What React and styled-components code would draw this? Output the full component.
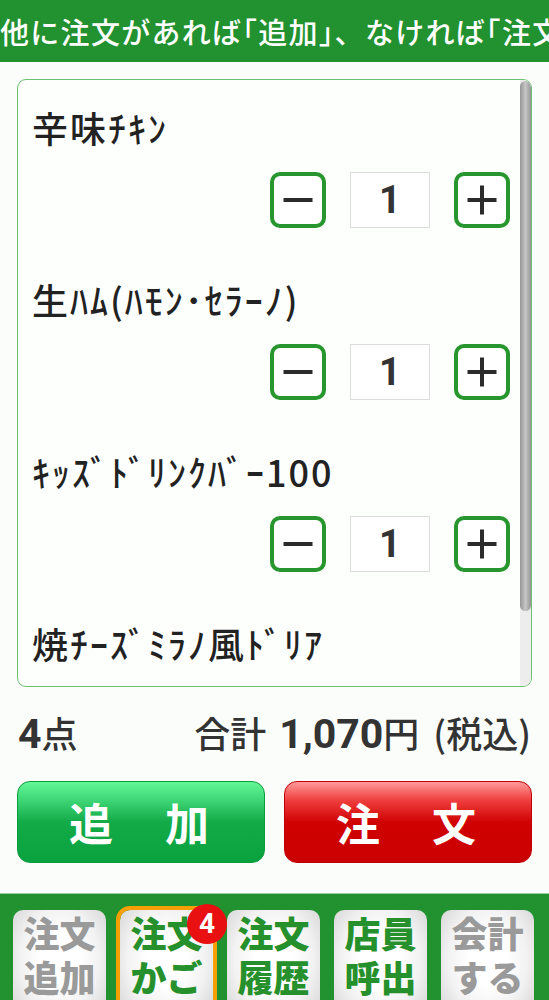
import React from "react";
import styled, { createGlobalStyle } from "styled-components";

const GlobalStyle = createGlobalStyle`
  html, body {
    margin: 0;
    padding: 0;
    background: #fbfdfb;
    font-family: "Noto Sans CJK JP", "Noto Sans", sans-serif;
  }
`;

const items = [
    { name: "辛味ﾁｷﾝ", qty: 1 },
    { name: "生ﾊﾑ(ﾊﾓﾝ･ｾﾗｰﾉ)", qty: 1 },
    { name: "ｷｯｽﾞﾄﾞﾘﾝｸﾊﾞｰ100", qty: 1 },
    { name: "焼ﾁｰｽﾞﾐﾗﾉ風ﾄﾞﾘｱ", qty: 1 },
];

const tabs = [
    { label: ["注文", "追加"], active: false },
    { label: ["注文", "かご"], active: true, selected: true, badge: 4 },
    { label: ["注文", "履歴"], active: true },
    { label: ["店員", "呼出"], active: true },
    { label: ["会計", "する"], active: false },
];

const App = () => {
    return (
        <Screen>
            <GlobalStyle />
            <Header>他に注文があれば｢追加｣、なければ｢注文｣ボタンを押してください</Header>

            <Cart>
                <CartList>
                    {items.map((item, i) => (
                        <Item key={i}>
                            <ItemName>{item.name}</ItemName>
                            <Controls>
                                <StepButton>
                                    <svg width="32" height="32" viewBox="0 0 32 32">
                                        <path d="M1.5 16H30.5" stroke="#2b2b2b" strokeWidth="4" />
                                    </svg>
                                </StepButton>
                                <Qty>{item.qty}</Qty>
                                <StepButton>
                                    <svg width="32" height="32" viewBox="0 0 32 32">
                                        <path d="M1.5 16H30.5M16 1.5V30.5" stroke="#2b2b2b" strokeWidth="4" />
                                    </svg>
                                </StepButton>
                            </Controls>
                        </Item>
                    ))}
                </CartList>
                <ScrollTrack>
                    <ScrollThumb />
                </ScrollTrack>
            </Cart>

            <Summary>
                <span><Num>4</Num>点</span>
                <span>
                    合計<Num $gap>1,070</Num>円<Paren>(税込)</Paren>
                </span>
            </Summary>

            <Actions>
                <ActionButton $color="green">追　加</ActionButton>
                <ActionButton $color="red">注　文</ActionButton>
            </Actions>

            <NavBar>
                {tabs.map((t, i) => (
                    <Tab key={i} $active={t.active} $selected={t.selected}>
                        <span>{t.label[0]}</span>
                        <span>{t.label[1]}</span>
                        {t.badge && <Badge>{t.badge}</Badge>}
                    </Tab>
                ))}
            </NavBar>
        </Screen>
    );
};

const Screen = styled.div`
    width: 549px;
    height: 1000px;
    display: flex;
    flex-direction: column;
    overflow: hidden;
`;

const Header = styled.div`
    height: 62px;
    flex-shrink: 0;
    background: #229130;
    color: #fff;
    font-size: 29px;
    font-weight: 500;
    line-height: 62px;
    white-space: nowrap;
    overflow: hidden;
    letter-spacing: 1.3px;
`;

const Cart = styled.div`
    margin: 17px 17px 0 17px;
    height: 606px;
    flex-shrink: 0;
    border: 1px solid #6cc070;
    border-radius: 9px;
    background: #fdfffd;
    overflow: hidden;
    display: flex;
`;

const CartList = styled.div`
    flex: 1;
    overflow: hidden;
    padding: 25px 10px 0 14px;
`;

const ScrollTrack = styled.div`
    width: 11px;
    flex-shrink: 0;
    background: #ededed;
    padding-top: 1px;
`;

const ScrollThumb = styled.div`
    height: 530px;
    border-radius: 6px;
    background: linear-gradient(90deg, #959595, #c6c6c6 50%, #959595);
`;

const Item = styled.div`
    display: flex;
    flex-direction: column;
    margin-bottom: 49px;
`;

const ItemName = styled.div`
    font-size: 36px;
    font-weight: 500;
    line-height: 44px;
    height: 44px;
    color: #222;
    white-space: nowrap;
    letter-spacing: 2px;
`;

const Controls = styled.div`
    display: flex;
    justify-content: flex-end;
    gap: 24px;
    margin-top: 23px;
`;

const StepButton = styled.div`
    width: 56px;
    height: 56px;
    box-sizing: border-box;
    border: 4px solid #28962e;
    border-radius: 10px;
    background: #fff;
    display: flex;
    align-items: center;
    justify-content: center;
`;

const Qty = styled.div`
    width: 80px;
    height: 56px;
    box-sizing: border-box;
    border: 1px solid #dcdcdc;
    background: #fff;
    display: flex;
    align-items: center;
    justify-content: center;
    font-family: Roboto, "Noto Sans", sans-serif;
    font-size: 38px;
    font-weight: 700;
    color: #333;
`;

const Summary = styled.div`
    display: flex;
    justify-content: space-between;
    align-items: center;
    height: 64px;
    margin-top: 13px;
    padding: 0 18px 0 18px;
    font-size: 36px;
    font-weight: 500;
    color: #333;
    white-space: nowrap;
`;

const Num = styled.span`
    font-family: Roboto, "Noto Sans", sans-serif;
    font-size: 41px;
    font-weight: 700;
    margin: ${(p) => (p.$gap ? "0 0 0 13px" : "0")};
`;

const Paren = styled.span`
    margin-left: 14px;
`;

const Actions = styled.div`
    display: flex;
    gap: 19px;
    margin: 17px 17px 0 17px;
`;

const ActionButton = styled.div`
    flex: 1;
    height: 82px;
    box-sizing: border-box;
    border-radius: 13px;
    display: flex;
    align-items: center;
    justify-content: center;
    color: #fff;
    font-size: 44px;
    font-weight: 700;
    letter-spacing: 4px;
    border: 1px solid ${(p) => (p.$color === "green" ? "#0b9a3c" : "#c00000")};
    background: ${(p) =>
        p.$color === "green"
            ? "linear-gradient(180deg, #63f796 0%, #3fd777 22%, #13aa48 50%, #0aa23f 100%)"
            : "linear-gradient(180deg, #ff9a9a 0%, #f04040 22%, #d00202 50%, #cb0000 100%)"};
`;

const NavBar = styled.div`
    margin-top: auto;
    height: 107px;
    flex-shrink: 0;
    background: #229130;
    border-top: 1px solid #9ccf9f;
    display: flex;
    gap: 14px;
    padding: 16px 13px 0 13px;
    box-sizing: border-box;
`;

const Tab = styled.div`
    position: relative;
    width: 93px;
    height: 110px;
    flex-shrink: 0;
    box-sizing: border-box;
    border-radius: 10px;
    outline: ${(p) => (p.$selected ? "4px solid #f5a000" : "none")};
    background: radial-gradient(ellipse at 50% 45%, #ffffff 30%, #f2f2f2 60%, #d0d0d0 100%);
    display: flex;
    flex-direction: column;
    align-items: center;
    font-size: 36px;
    font-weight: 900;
    line-height: 44px;
    color: ${(p) => (p.$active ? "#26902c" : "#9a9a9a")};
`;

const Badge = styled.div`
    position: absolute;
    top: -6px;
    right: -14px;
    width: 40px;
    height: 40px;
    border-radius: 50%;
    background: #e81010;
    color: #fff;
    font-family: Roboto, "Noto Sans", sans-serif;
    font-size: 28px;
    font-weight: 700;
    line-height: 40px;
    text-align: center;
`;

export default App;
